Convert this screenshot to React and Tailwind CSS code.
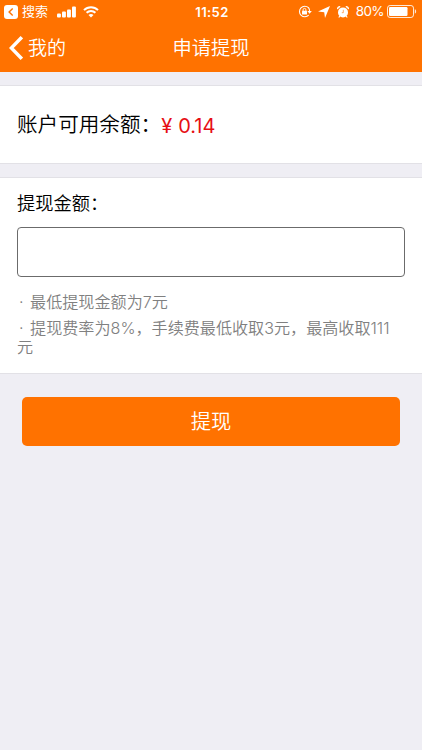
import React from 'react';

const FONT = "font-['Inter','Noto_Sans_CJK_SC',sans-serif] font-[350]";

const BackToAppIcon = () => (
  <svg width="14" height="14" viewBox="0 0 14 14">
    <rect width="14" height="14" rx="3" fill="#fff" />
    <path d="M8.7 3.5 5.1 7l3.6 3.5" fill="none" stroke="#ff7200" strokeWidth="1.4" />
  </svg>
);

const SignalIcon = () => (
  <svg width="19" height="12" viewBox="0 0 19 12" fill="#fff">
    <rect x="0" y="7.4" width="3.9" height="4.1" rx="1" />
    <rect x="5" y="5.6" width="3.9" height="5.9" rx="1" />
    <rect x="10" y="3.4" width="3.9" height="8.1" rx="1" />
    <rect x="15" y="0.4" width="3.9" height="11.1" rx="1" />
  </svg>
);

const WifiIcon = () => (
  <svg width="16" height="12" viewBox="0 0 16 12">
    <g fill="none" stroke="#fff" strokeWidth="2">
      <path d="M1 4.1a10 10 0 0 1 14 0" />
      <path d="M3.6 6.8a6.3 6.3 0 0 1 8.8 0" />
    </g>
    <path d="M8 11.6 5.5 9.1a3.6 3.6 0 0 1 5 0Z" fill="#fff" />
  </svg>
);

const RotationLockIcon = () => (
  <svg width="14" height="13" viewBox="0 0 14 13" fill="none" stroke="#fff">
    <path d="M10.5 2.7a5.3 5.3 0 1 0 .2 7.4M11.6 6.6a5.3 5.3 0 0 0-1.1-3.9" strokeWidth="1.1" />
    <path d="M9.4 6.1h4.4l-2.2 2.7Z" fill="#fff" stroke="none" />
    <rect x="4" y="5.8" width="5" height="3.6" rx="0.5" fill="#fff" stroke="none" />
    <path d="M5.1 6V4.8a1.4 1.4 0 0 1 2.8 0V6" strokeWidth="0.9" />
  </svg>
);

const LocationIcon = () => (
  <svg width="12" height="12" viewBox="0 0 12 12" fill="#fff">
    <path d="M12 0 7 12 6.2 6.3 0 5.6Z" />
  </svg>
);

const AlarmIcon = () => (
  <svg width="12" height="12" viewBox="0 0 12 12">
    <circle cx="6" cy="6.4" r="5" fill="#fff" />
    <path d="M.7 3.1A2.1 2.1 0 0 1 3.2.8M11.3 3.1A2.1 2.1 0 0 0 8.8.8" fill="none" stroke="#fff" strokeWidth="1.4" />
    <path d="m2.8 10-1 1.5M9.2 10l1 1.5" stroke="#fff" strokeWidth="1.2" />
    <path d="M6.3 3.8v2.9H4.8" fill="none" stroke="#ff7200" strokeWidth="0.6" />
  </svg>
);

const BatteryIcon = () => (
  <svg width="30" height="13" viewBox="0 0 30 13">
    <rect x="0.5" y="0.5" width="26" height="12" rx="2.6" fill="none" stroke="#fff" strokeOpacity="0.85" />
    <rect x="2" y="2" width="18.5" height="9" rx="1.2" fill="#fff" />
    <path d="M27.8 4.3c1.8.6 1.8 3.8 0 4.4Z" fill="#fff" fillOpacity="0.85" />
  </svg>
);

const StatusBar = () => (
  <div className="grid h-[23px] grid-cols-[1fr_auto_1fr] items-center pl-[4px] pr-[5px]">
    <div className="flex items-center">
      <BackToAppIcon />
      <span className="ml-[4px] mr-[9px] text-[13px] font-normal leading-none">搜索</span>
      <SignalIcon />
      <span className="ml-[7px]"><WifiIcon /></span>
    </div>
    <span className="pl-[3px] pt-px text-[13px] font-semibold leading-none tracking-[0.4px]">11:52</span>
    <div className="flex items-center justify-end">
      <RotationLockIcon />
      <span className="ml-[6px]"><LocationIcon /></span>
      <span className="ml-[7px]"><AlarmIcon /></span>
      <span className="ml-[7px] mr-[3px] pt-px text-[13.5px] font-normal leading-none tracking-[-0.6px]">80%</span>
      <BatteryIcon />
    </div>
  </div>
);

const NavBar = () => (
  <div className="grid h-[49px] grid-cols-[1fr_auto_1fr] items-center px-[9px]">
    <button className="flex items-center gap-[5px] text-[19px] leading-none">
      <svg width="14" height="24" viewBox="0 0 14 24" fill="none" stroke="#fff" strokeWidth="3.4">
        <path d="M12.8 1.2 2.3 12l10.5 10.8" />
      </svg>
      <span className="pt-[2px]">我的</span>
    </button>
    <h1 className="pt-[2px] text-[19.3px] leading-none">申请提现</h1>
  </div>
);

export default function App() {
  return (
    <div className={`${FONT} min-h-[750px] w-full bg-[#efeef4] text-black`}>
      <header className="h-[72px] bg-[#ff7200] text-white">
        <StatusBar />
        <NavBar />
      </header>

      <section className="mt-[13px] flex h-[79px] items-center border-y border-[#e2e1e6] bg-white pl-[17px] pt-[2px] text-[20.6px] leading-none">
        <span>账户可用余额：</span>
        <span className="flex text-[20px] font-normal text-[#e60f14]">
          <span className="w-[17px]">¥</span>
          <span>0.14</span>
        </span>
      </section>

      <section className="mt-[13px] h-[197px] border-y border-[#e2e1e6] bg-white px-[17px] pt-[14px]">
        <label htmlFor="amount" className="block text-[18.3px] leading-[22px]">提现金额：</label>
        <input
          id="amount"
          type="text"
          className="mt-[13px] block h-[50px] w-[388px] rounded-[4px] border border-[#6b6b6b] bg-white px-3 outline-none"
        />
        <div className="mt-[16px] w-[380px] indent-[2px] text-[16.1px] leading-[19px] text-[#808080] [word-spacing:2px]">
          <p>· 最低提现金额为7元</p>
          <p className="mt-[7px]">· 提现费率为8%，手续费最低收取3元，最高收取111元</p>
        </div>
      </section>

      <button className="ml-[22px] mt-[23px] block h-[49px] w-[378px] rounded-[5px] bg-[#ff7200] pt-px text-[20.3px] leading-none text-white">
        提现
      </button>
    </div>
  );
}
